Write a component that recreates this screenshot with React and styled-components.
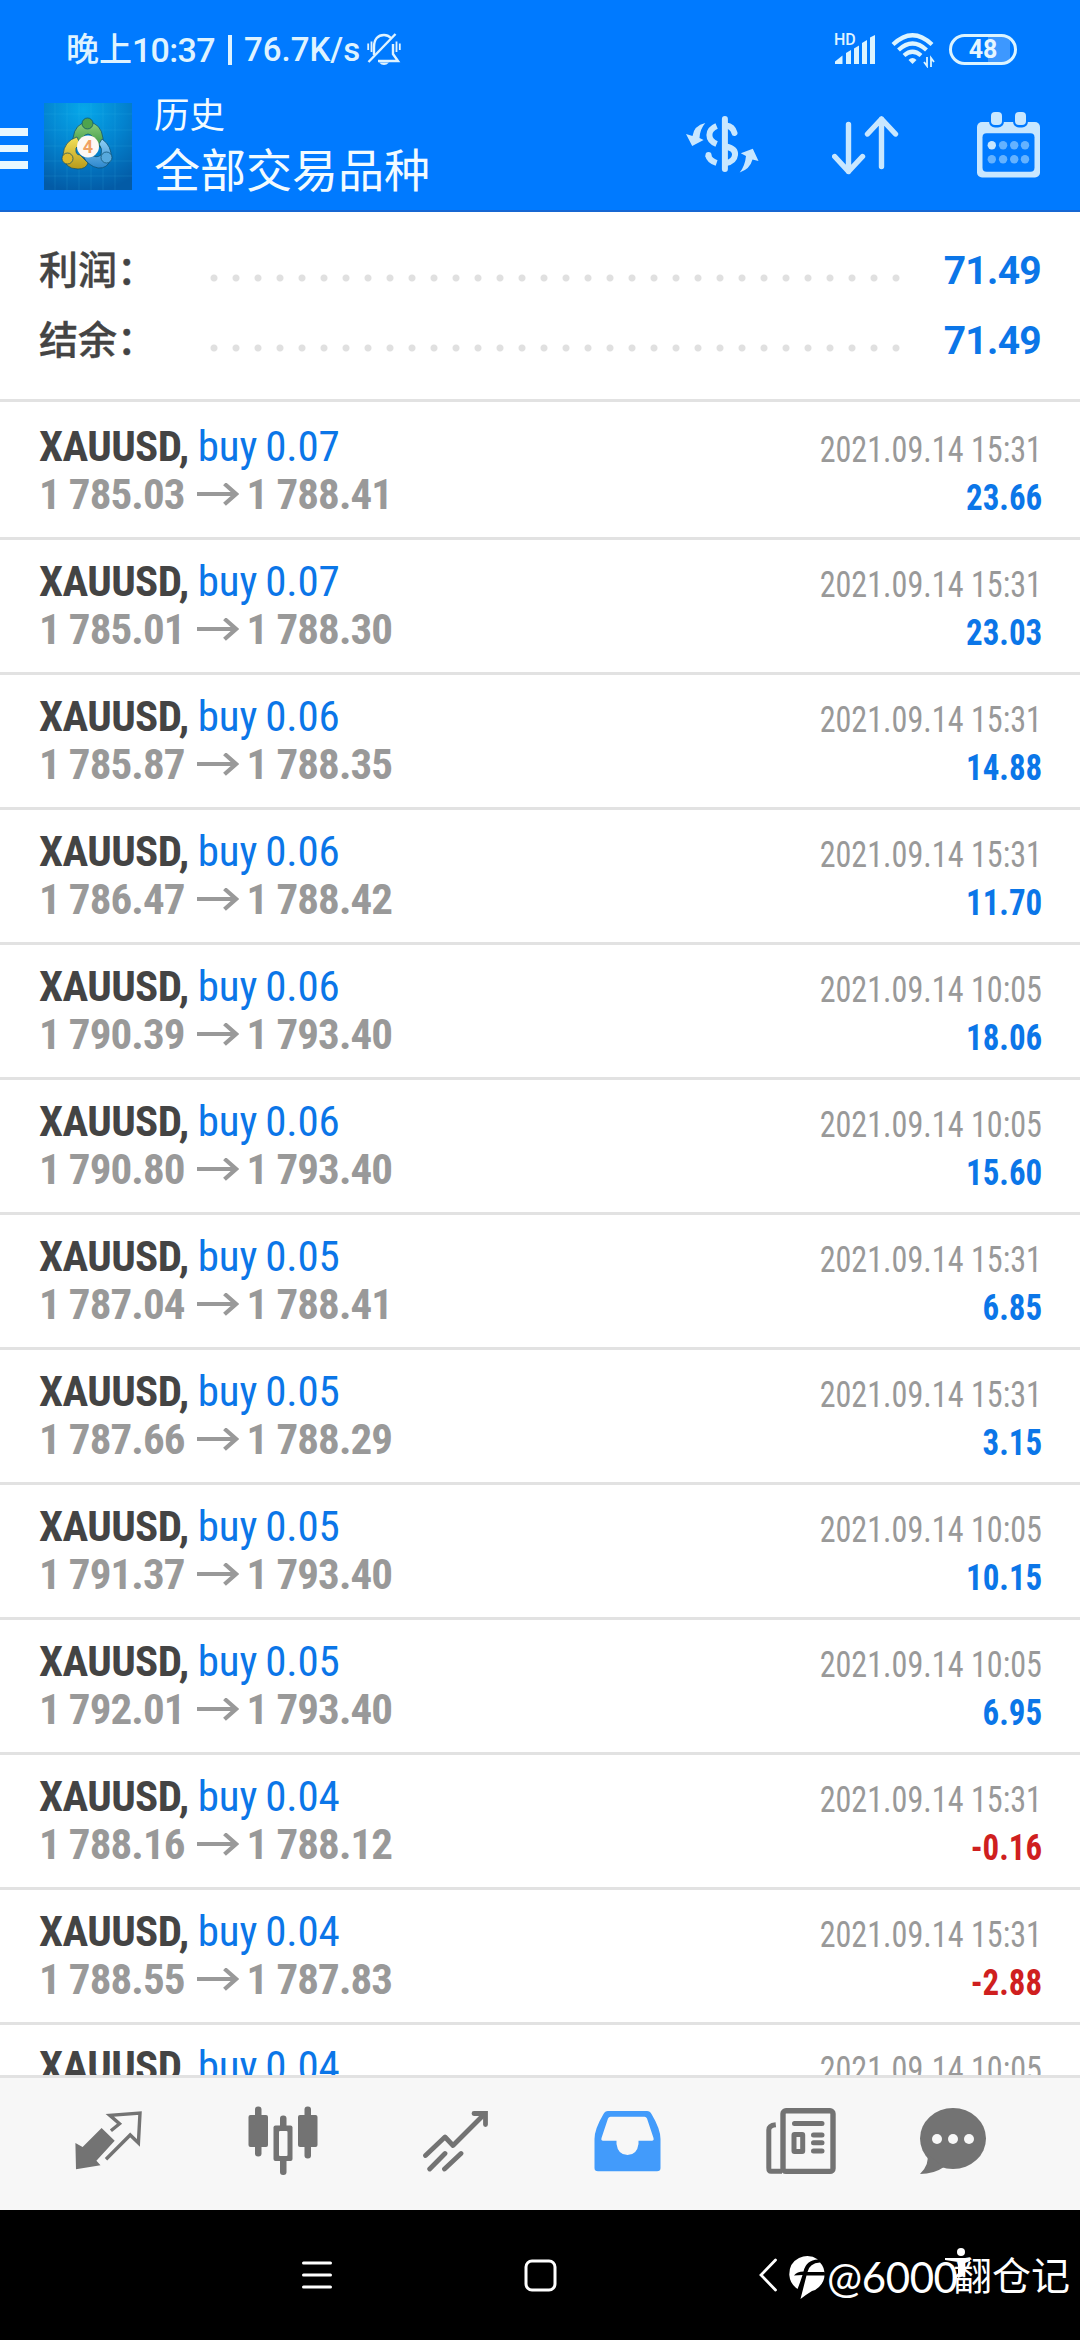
import React from "react";
import styled, { createGlobalStyle } from "styled-components";

const summary = [
  { label: "利润：", value: "71.49" },
  { label: "结余：", value: "71.49" },
];

const deals = [
  { volume: "0.07", open: "1 785.03", close: "1 788.41", time: "15:31", profit: "23.66" },
  { volume: "0.07", open: "1 785.01", close: "1 788.30", time: "15:31", profit: "23.03" },
  { volume: "0.06", open: "1 785.87", close: "1 788.35", time: "15:31", profit: "14.88" },
  { volume: "0.06", open: "1 786.47", close: "1 788.42", time: "15:31", profit: "11.70" },
  { volume: "0.06", open: "1 790.39", close: "1 793.40", time: "10:05", profit: "18.06" },
  { volume: "0.06", open: "1 790.80", close: "1 793.40", time: "10:05", profit: "15.60" },
  { volume: "0.05", open: "1 787.04", close: "1 788.41", time: "15:31", profit: "6.85" },
  { volume: "0.05", open: "1 787.66", close: "1 788.29", time: "15:31", profit: "3.15" },
  { volume: "0.05", open: "1 791.37", close: "1 793.40", time: "10:05", profit: "10.15" },
  { volume: "0.05", open: "1 792.01", close: "1 793.40", time: "10:05", profit: "6.95" },
  { volume: "0.04", open: "1 788.16", close: "1 788.12", time: "15:31", profit: "-0.16" },
  { volume: "0.04", open: "1 788.55", close: "1 787.83", time: "15:31", profit: "-2.88" },
  { volume: "0.04", open: "1 792.39", close: "1 793.40", time: "10:05", profit: "4.04" },
];

function StatusBar() {
  return (
    <Status>
      <StatusText>
        <span>晚上</span>
        <Clock>10:37</Clock>
        <Divider />
        <Speed>76.7K/s</Speed>
      </StatusText>
      <BellIcon />
      <StatusRight>
        <SignalIcon />
        <WifiIcon />
        <Battery>48</Battery>
      </StatusRight>
    </Status>
  );
}

function Header() {
  return (
    <Toolbar>
      <MenuButton>
        <i />
        <i />
        <i />
      </MenuButton>
      <Logo />
      <Titles>
        <Title>历史</Title>
        <Subtitle>全部交易品种</Subtitle>
      </Titles>
      <Actions>
        <SymbolsIcon />
        <SortIcon />
        <CalendarIcon />
      </Actions>
    </Toolbar>
  );
}

function Deal({ volume, open, close, time, profit }) {
  return (
    <Row>
      <Line>
        <Symbol>XAUUSD,</Symbol>
        <Volume>buy {volume}</Volume>
        <Time>2021.09.14 {time}</Time>
      </Line>
      <Line>
        <Price>{open}</Price>
        <ArrowIcon />
        <Price>{close}</Price>
        <Profit $loss={profit.startsWith("-")}>{profit}</Profit>
      </Line>
    </Row>
  );
}

function App() {
  return (
    <Phone>
      <GlobalStyle />
      <Top>
        <StatusBar />
        <Header />
      </Top>
      <Summary>
        {summary.map((item) => (
          <SummaryRow key={item.label}>
            <Label>{item.label}</Label>
            <Dots />
            <Total>{item.value}</Total>
          </SummaryRow>
        ))}
      </Summary>
      <List>
        {deals.map((deal, i) => (
          <Deal key={i} {...deal} />
        ))}
      </List>
      <Tabs>
        <QuotesIcon />
        <ChartIcon />
        <TradeIcon />
        <HistoryIcon />
        <NewsIcon />
        <ChatIcon />
      </Tabs>
      <SystemBar />
    </Phone>
  );
}

export default App;

/* icons */

function BellIcon() {
  return (
    <Bell width="34" height="34" viewBox="0 0 34 34" fill="none" stroke="#dff3ff" strokeWidth="2.4">
      <path d="M7 22 V14 C7 6 11 2 17 2 C20 2 22 3 24 5" />
      <path d="M26 11 V21 L31 28 H11" />
      <path d="M1.500 29 L28.500 1" />
      <path d="M1.200 10.500 V17 M4.500 8.500 V19 M29.500 8.500 V19 M32.800 10.500 V17" strokeWidth="1.800" />
      <path d="M12 29.500 H22 Q17 34.500 12 29.500 Z" fill="#dff3ff" stroke="none" />
    </Bell>
  );
}

function SignalIcon() {
  return (
    <Signal>
      <Hd>HD</Hd>
      <svg width="42" height="31" viewBox="0 0 42 31" fill="#dcf4ff">
        <path d="M1 30 V27.500 L8.500 21.500 V30 Z" />
        <path d="M12 30 V19 L17 16 V30 Z" />
        <path d="M20 30 V14.500 L25 11.500 V30 Z" />
        <path d="M28 30 V9 L33 6 V30 Z" />
        <path d="M36 30 V3.500 L41 1 V30 Z" />
      </svg>
    </Signal>
  );
}

function WifiIcon() {
  return (
    <Wifi width="44" height="35" viewBox="0 0 44 35" fill="none" stroke="#dcf4ff">
      <path d="M2 11.500 Q21.500 -7 41 11.500" strokeWidth="4.200" />
      <path d="M7.500 17 Q21.500 4 35.500 17" strokeWidth="4.200" />
      <path d="M13 22.500 Q21.500 15 30 22.500" strokeWidth="4.200" />
      <path d="M17.500 27 Q21.500 23 25.500 27 L21.500 31 Z" fill="#dcf4ff" stroke="none" />
      <path d="M36 24 V33 L33 29 M40 34 V25 L43 29" strokeWidth="1.800" />
    </Wifi>
  );
}

function Logo() {
  return (
    <LogoSvg width="88" height="87" viewBox="0 0 88 87">
      <defs>
        <radialGradient id="bg" cx="45%" cy="8%" r="95%">
          <stop offset="0" stopColor="#06a8ea" />
          <stop offset="0.5" stopColor="#0383cf" />
          <stop offset="1" stopColor="#035ba6" />
        </radialGradient>
        <linearGradient id="green" x1="0" y1="0" x2="0" y2="1">
          <stop offset="0" stopColor="#8fd07c" />
          <stop offset="1" stopColor="#2f8d3c" />
        </linearGradient>
        <linearGradient id="yellow" x1="0" y1="0" x2="0" y2="1">
          <stop offset="0" stopColor="#f3e15a" />
          <stop offset="1" stopColor="#b89a1a" />
        </linearGradient>
        <linearGradient id="sky" x1="0" y1="0" x2="0" y2="1">
          <stop offset="0" stopColor="#8fd0f5" />
          <stop offset="1" stopColor="#2b86cd" />
        </linearGradient>
      </defs>
      <rect width="88" height="87" fill="url(#bg)" />
      <path
        d="M11 0 V87 M23 0 V87 M35 0 V87 M47 0 V87 M59 0 V87 M71 0 V87 M0 11 H88 M0 27 H88 M0 43 H88 M0 58 H88 M0 73 H88"
        stroke="#4fc3f5"
        strokeOpacity="0.14"
      />
      <g stroke="#0b4b6b" strokeOpacity="0.7" strokeWidth="1">
        <path d="M29 47 V35 Q31 20 44 19 Q57 20 59 35 V46 L50 40 Q50 32 44 31 Q38 32 38 40 Z" fill="url(#green)" />
        <path d="M33 34 Q20 38 19 52 Q20 66 34 66 Q42 66 44 60 L36 52 Q31 52 32 45 L36 41 Z" fill="url(#yellow)" />
        <path d="M58 36 Q68 43 67 55 Q64 66 54 65 Q44 63 39 53 L47 51 Q52 56 57 52 Q59 46 55 41 Z" fill="url(#sky)" />
        <circle cx="43.500" cy="20.500" r="5.500" fill="#4ea34e" />
        <circle cx="23.500" cy="55.500" r="5.500" fill="#dcb92c" />
        <circle cx="62.500" cy="54.500" r="5.500" fill="#57a9dd" />
      </g>
      <circle cx="44" cy="43.500" r="11" fill="#fdf8f4" />
      <text x="44" y="50" textAnchor="middle" fontFamily="Roboto" fontWeight="700" fontSize="18" fill="#f0a062">
        4
      </text>
    </LogoSvg>
  );
}

function SymbolsIcon() {
  return (
    <svg width="73" height="58" viewBox="0 0 73 58" fill="none" stroke="#c8e7ff" strokeWidth="6">
      <path d="M38.900 3 V53" strokeLinecap="round" />
      <path d="M40 9.500 Q47 10.500 48.500 17" strokeLinecap="round" />
      <path d="M40 30.500 C47 32 49.500 35 49 39 C48.500 43.500 46 46 40 47" />
      <path d="M30.600 10 C21 14 21 24 30.600 28" />
      <path d="M22 39 C23 43 26 45.500 30.600 47" />
      <path d="M22.500 39.500 V39" strokeLinecap="round" />
      <path
        d="M19.300 7 Q8 9.500 6.500 20 L0 18 L6.200 30 L17.600 24 L13.500 22 Q14 13 19.300 7 Z M53.700 56.500 Q64 53 66.500 43.500 L72.500 45 L66.800 32.700 L54.800 37.300 L60 40 Q59 50 53.700 56.500 Z"
        fill="#c8e7ff"
        stroke="none"
      />
    </svg>
  );
}

function SortIcon() {
  return (
    <svg
      width="68"
      height="60"
      viewBox="0 0 68 60"
      fill="none"
      stroke="#c8e7ff"
      strokeWidth="5.400"
      strokeLinecap="round"
      strokeLinejoin="round"
    >
      <path d="M16.500 8.500 V55.500 M2.700 40.500 L16.500 55.500 L30.500 40.500" />
      <path d="M49.500 50.500 V3 M35.500 18 L49.500 3 L63.500 18" />
    </svg>
  );
}

function CalendarIcon() {
  return (
    <svg width="63" height="66" viewBox="0 0 63 66">
      <rect y="10" width="63" height="55.500" rx="5" fill="#c8e7ff" />
      <rect x="5.500" y="21.300" width="52" height="38.500" rx="4" fill="#007aff" />
      <rect x="12" y="-3" width="15" height="18.500" rx="6" fill="#007aff" />
      <rect x="36" y="-3" width="15" height="18.500" rx="6" fill="#007aff" />
      <rect x="14" y="0" width="11" height="13" rx="4" fill="#c8e7ff" />
      <rect x="38" y="0" width="11" height="13" rx="4" fill="#c8e7ff" />
      {[33.3, 47.3].map((y, row) =>
        [14.8, 26.1, 37.2, 48].map((x, col) => (
          <circle key={x + y} cx={x} cy={y} r="4.200" fill={row + col === 0 ? "#c8e7ff" : "#64b2ff"} />
        ))
      )}
    </svg>
  );
}

function ArrowIcon() {
  return (
    <Arrow width="42" height="26" viewBox="0 0 42 26" fill="none" stroke="#999" strokeWidth="4.200">
      <path d="M0 11 H39 M27.500 0.800 L39 11 L27.500 21.200" />
    </Arrow>
  );
}

function QuotesIcon() {
  return (
    <svg width="68" height="60" viewBox="0 0 68 60">
      <path d="M0.400 32 L7.600 36 L26.600 17 L39.700 29.700 L21.400 49.700 L25.500 54.300 L1 58.300 Z" fill="#737373" />
      <path
        d="M35.900 19.700 L44.500 12.700 L34.800 4.300 L65 2 L63.400 32 L55.200 24 L31 48.300"
        fill="none"
        stroke="#737373"
        strokeWidth="3.400"
      />
    </svg>
  );
}

function ChartIcon() {
  return (
    <svg width="70" height="70" viewBox="0 0 70 70" fill="#737373">
      <rect x="7" y="0.500" width="6.500" height="50" rx="3" />
      <rect x="0.500" y="9" width="19.500" height="32" rx="2" />
      <rect x="32" y="9.500" width="6.500" height="59.500" rx="3" />
      <rect x="25.500" y="19.500" width="19" height="35.500" rx="2" />
      <rect x="31" y="25" width="8.500" height="25" rx="1" fill="#f7f7f7" />
      <rect x="56.500" y="0.500" width="6.500" height="52" rx="3" />
      <rect x="50" y="9" width="19.500" height="32" rx="2" />
    </svg>
  );
}

function TradeIcon() {
  return (
    <svg width="66" height="62" viewBox="0 0 66 62" fill="none" stroke="#737373" strokeWidth="4.800" strokeLinecap="round">
      <path d="M2.500 45.500 L22 27 L30 35.500 L61 4.500" strokeLinejoin="round" />
      <path d="M51 3.500 H62.500 V14.500" />
      <path d="M6.700 59 L22 43.500 M21.500 59 L38 43.500" />
    </svg>
  );
}

function HistoryIcon() {
  return (
    <svg width="67" height="62" viewBox="0 0 67 62">
      <path
        fillRule="evenodd"
        d="M14 1 H53 Q56 1 57.500 4 Q66.500 19 66.500 29 V58 Q66.500 61.300 63 61.300 H4 Q0.500 61.300 0.500 58 V29 Q0.500 19 9.500 4 Q11 1 14 1 Z M16.500 6.700 Q14.800 6.700 14 8.500 L7.500 28 Q6.800 30.700 9 30.700 H22.500 V34 Q24 45 33.500 45 Q43 45 44.500 34 V30.700 H58 Q60.200 30.700 59.500 28 L53 8.500 Q52.200 6.700 50.500 6.700 Z"
        fill="#429bfb"
      />
    </svg>
  );
}

function NewsIcon() {
  return (
    <svg width="70" height="67" viewBox="0 0 70 67" fill="none" stroke="#737373">
      <path d="M16 63.300 H5 Q2.800 63.300 2.800 60 V22 Q2.800 17.500 9.800 16.800" strokeWidth="5" />
      <rect x="17" y="2.700" width="50" height="60.700" rx="3" strokeWidth="5.400" />
      <path d="M28.500 15.500 H56 M47.500 27 H56 M47.500 34.800 H56 M47.500 43 H56" strokeWidth="5" strokeLinecap="round" />
      <rect x="28" y="26.500" width="8.700" height="17" rx="0.500" strokeWidth="5" />
    </svg>
  );
}

function ChatIcon() {
  return (
    <svg width="66" height="67" viewBox="0 0 66 67" fill="#737373">
      <ellipse cx="33" cy="30.500" rx="33" ry="30.500" />
      <path d="M7 46 Q10 56 0 66 Q14 66 24 59 Z" />
      <circle cx="17" cy="31" r="5" fill="#f7f7f7" />
      <circle cx="33" cy="31" r="5" fill="#f7f7f7" />
      <circle cx="49" cy="31" r="5" fill="#f7f7f7" />
    </svg>
  );
}

function SystemBar() {
  return (
    <System>
      <svg width="30" height="30" viewBox="0 0 30 30" stroke="#fff" strokeWidth="3" strokeLinecap="round">
        <path d="M1.500 3 H28.500 M1.500 15 H28.500 M1.500 27 H28.500" />
      </svg>
      <svg width="33" height="33" viewBox="0 0 33 33" fill="none" stroke="#fff" strokeWidth="3">
        <rect x="2" y="2" width="29" height="29" rx="6" />
      </svg>
      <svg width="19" height="34" viewBox="0 0 19 34" fill="none" stroke="#fff" strokeWidth="2.800" strokeLinecap="round">
        <path d="M16.500 2 L2 17 L16.500 32" />
      </svg>
      <Watermark>
        <svg width="36" height="43" viewBox="0 0 36 43">
          <path
            d="M34.500 12 Q38 23 30 31 Q27 34 23 35 Q18 38 11.500 43 L17.500 19.500 H35.500 V16 H18.500 Q20.500 7 31 6.500 Q33.500 9 34.500 12 Z"
            fill="#fff"
          />
          <path
            d="M29 3.500 Q17 4 14.500 15.500 Q8 15.500 5 19.500 L13.500 19 Q11 27 8.500 33 Q1 28 0.300 19 Q0 7 10 2 Q20 -2.500 29 3.500 Z"
            fill="#fff"
          />
        </svg>
        <Handle>@6000</Handle>
        <HandleCjk>翻仓记</HandleCjk>
        <Person width="26" height="42" viewBox="0 0 26 42" fill="#fff">
          <circle cx="16" cy="4" r="4" />
          <path d="M0 10 H25 V13 L20 15 L19 28 L13 30 V14 L0 12 Z" />
        </Person>
      </Watermark>
    </System>
  );
}

/* styles */

const GlobalStyle = createGlobalStyle`
  body {
    margin: 0;
    background: #fff;
  }

  * {
    box-sizing: border-box;
  }

  svg {
    display: block;
    flex: none;
  }
`;

const Phone = styled.div`
  width: 1080px;
  height: 2340px;
  display: flex;
  flex-direction: column;
  overflow: hidden;
  font-family: Roboto, "Noto Sans CJK SC", sans-serif;
  background: #fff;
`;

const Top = styled.div`
  height: 212px;
  flex: none;
  background: #007aff;
  border-bottom: 2px solid #1667d3;
`;

const Status = styled.div`
  height: 98px;
  display: flex;
  align-items: center;
  padding: 1px 63px 0 66px;
  color: #dff3ff;
`;

const StatusText = styled.div`
  display: flex;
  align-items: center;
  font-size: 33px;
  line-height: 40px;
  font-weight: 500;
  white-space: nowrap;
`;

const Clock = styled.span`
  width: 86px;
  font-size: 34px;
  letter-spacing: -0.7px;
`;

const Divider = styled.i`
  width: 4px;
  height: 30px;
  margin: 0 12px 0 10px;
  background: #dff3ff;
`;

const Speed = styled.span`
  width: 114px;
  font-size: 33px;
`;

const Bell = styled.svg`
  margin-left: 9px;
`;

const StatusRight = styled.div`
  display: flex;
  align-items: center;
  margin-left: auto;
`;

const Signal = styled.div`
  position: relative;
  margin-right: 15px;
`;

const Hd = styled.span`
  position: absolute;
  left: 0;
  top: -2px;
  font-size: 16px;
  line-height: 16px;
  font-weight: 500;
`;

const Wifi = styled.svg`
  margin: 2px 14px 0 0;
`;

const Battery = styled.div`
  width: 68px;
  height: 31px;
  border: 3px solid #dcf4ff;
  border-radius: 16px;
  font-size: 25px;
  line-height: 26px;
  font-weight: 700;
  text-align: center;
  color: #e6f6ff;
  background: linear-gradient(90deg, transparent 62%, #3d98ff 62%) 0 0 / 58px 100% no-repeat;
`;

const Toolbar = styled.div`
  height: 112px;
  display: flex;
  align-items: flex-start;
  padding-right: 40px;
`;

const MenuButton = styled.div`
  width: 28px;
  margin: 30px 16px 0 0;
  display: flex;
  flex-direction: column;
  gap: 9px;

  i {
    height: 7.5px;
    background: #e8f8ff;
  }
`;

const LogoSvg = styled.svg`
  margin-top: 5px;
`;

const Titles = styled.div`
  margin-left: 22px;
  color: #f2fbff;
`;

const Title = styled.div`
  font-size: 35.5px;
  line-height: 36px;
`;

const Subtitle = styled.div`
  font-size: 46px;
  line-height: 50px;
  margin-top: 12px;
`;

const Actions = styled.div`
  display: flex;
  margin: 14px 0 0 auto;
  align-items: flex-start;

  svg:nth-child(1),
  svg:nth-child(2) {
    margin-top: 4px;
  }

  svg + svg {
    margin-left: 73px;
  }

  svg:last-child {
    margin-left: 77px;
  }
`;

const Summary = styled.div`
  height: 190px;
  flex: none;
  padding-top: 24px;
  border-bottom: 3px solid #e2e2e2;
`;

const SummaryRow = styled.div`
  height: 70px;
  display: flex;
  align-items: center;
  padding: 0 39px;
`;

const Label = styled.span`
  width: 164px;
  font-size: 39px;
  line-height: 70px;
  font-weight: 500;
  color: #444;
  -webkit-text-stroke: 0.4px #444;
`;

const Dots = styled.div`
  width: 704px;
  height: 8px;
  margin-top: 14px;
  background: radial-gradient(circle at 11px 4px, #e0e0e0 3px, transparent 4px) 0 0 / 22px 8px repeat-x;
`;

const Total = styled.span`
  margin-left: auto;
  font-size: 39px;
  line-height: 70px;
  font-weight: 700;
  letter-spacing: -0.7px;
  color: #0b76e8;
`;

const List = styled.div`
  flex: 1;
  min-height: 0;
  overflow: hidden;
  padding-top: 3px;
`;

const Row = styled.div`
  height: 135px;
  padding: 17px 38px 0 39px;
  border-bottom: 3px solid #e2e2e2;
  font-family: "Roboto Condensed", Roboto, sans-serif;
  font-stretch: 75%;
`;

const Line = styled.div`
  height: 48px;
  display: flex;
  align-items: baseline;
  font-size: 43px;
  line-height: 48px;
  white-space: nowrap;
`;

const Symbol = styled.span`
  font-weight: 700;
  letter-spacing: -0.6px;
  color: #444;
`;

const Volume = styled.span`
  margin-left: 9px;
  letter-spacing: -0.1px;
  word-spacing: -2px;
  color: #0b76e8;
`;

/* Right column figures are set narrower than the condensed face */
const Figure = styled.span`
  margin-left: auto;
  font-size: 36px;
  transform: translateY(1px) scaleX(${(props) => props.$squeeze});
  transform-origin: right;
`;

const Time = styled(Figure).attrs({ $squeeze: 0.893 })`
  color: #999;
`;

const Profit = styled(Figure).attrs({ $squeeze: 0.915 })`
  font-weight: 700;
  color: ${(props) => (props.$loss ? "#cf1f1f" : "#0b76e8")};
`;

const Price = styled.span`
  font-weight: 700;
  letter-spacing: -0.9px;
  color: #999;
`;

const Arrow = styled.svg`
  margin: 0 8px 0 12px;
`;

const Tabs = styled.div`
  height: 135px;
  flex: none;
  display: flex;
  align-items: center;
  gap: 105px;
  padding: 0 0 6px 75px;
  background: #f7f7f7;
  border-top: 3px solid #e2e2e2;

  svg:last-child {
    margin-left: -21px;
  }
`;

const System = styled.div`
  height: 130px;
  flex: none;
  display: flex;
  align-items: center;
  padding-left: 302px;
  background: #000;

  & > svg:nth-child(2) {
    margin-left: 192px;
  }

  & > svg:nth-child(3) {
    margin-left: 202px;
  }
`;

const Watermark = styled.div`
  position: relative;
  display: flex;
  align-items: center;
  margin-left: 11px;
  padding-top: 4px;
  color: #fff;
  white-space: nowrap;
`;

const Handle = styled.span`
  width: 126px;
  margin-left: 2px;
  font-family: Lato, sans-serif;
  font-size: 42px;
  line-height: 50px;
  letter-spacing: -0.4px;
`;

const HandleCjk = styled.span`
  font-size: 39px;
  line-height: 50px;
`;

const Person = styled.svg`
  position: absolute;
  left: 156px;
  top: 0;
`;
